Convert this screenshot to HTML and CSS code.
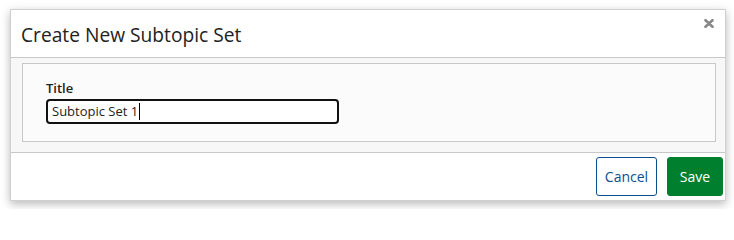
FILE: index.html
```html
<!DOCTYPE html>
<html>
<head>
<meta charset="utf-8">
<link rel="stylesheet" href="styles.css">
</head>
<body>
<div class="dialog">
  <div class="header">
    <h1 class="title">Create New Subtopic Set</h1>
    <svg class="close" width="10" height="9" viewBox="0 0 10 9" aria-label="Close">
      <path d="M1.5 1.2 L8.5 7.8 M8.5 1.2 L1.5 7.8" stroke="#888" stroke-width="2.6" stroke-linecap="round"/>
    </svg>
  </div>
  <div class="body">
    <div class="panel">
      <div class="label">Title</div>
      <div class="input">Subtopic Set 1<span class="caret"></span></div>
    </div>
  </div>
  <div class="footer">
    <button class="btn btn-cancel">Cancel</button>
    <button class="btn btn-save">Save</button>
  </div>
</div>
</body>
</html>
```
FILE: styles.css
```css
html, body {
  margin: 0;
  background: #fff;
}
body {
  padding: 9px 8px 8px 10px;
  font-family: "Open Sans", "Noto Sans", sans-serif;
}
.dialog {
  width: 716px;
  height: 192px;
  box-sizing: border-box;
  border: 1px solid #d0d0d0;
  background: #fff;
  box-shadow: 0 3px 9px rgba(0,0,0,0.28);
  display: flex;
  flex-direction: column;
}
.header {
  height: 47px;
  border-bottom: 1px solid #c8c8c8;
  display: flex;
  align-items: flex-start;
  justify-content: space-between;
  padding: 0 11px 0 10px;
}
.title {
  margin: 0;
  padding-top: 12px;
  font-size: 19.2px;
  font-weight: 400;
  color: #222;
  line-height: 26px;
}
.close {
  margin-top: 9px;
  display: block;
}
.body {
  background: #f7f7f7;
  padding: 5px 9px 10px 11px;
}
.panel {
  border: 1px solid #c8c8c8;
  background: #fbfbfb;
  height: 79px;
  box-sizing: border-box;
  padding: 14px 24px 0 23px;
}
.label {
  font-size: 13px;
  font-weight: 600;
  color: #222;
  line-height: 21px;
}
.input {
  width: 293px;
  height: 25px;
  box-sizing: border-box;
  border: 2px solid #111;
  border-radius: 4px;
  background: #fff;
  font-size: 13px;
  line-height: 21px;
  padding-left: 4px;
  color: #222;
  display: flex;
  align-items: center;
}
.caret {
  display: inline-block;
  width: 1px;
  height: 17px;
  background: #000;
  margin-left: 1px;
}
.footer {
  flex: 1;
  border-top: 1px solid #c8c8c8;
  display: flex;
  justify-content: flex-end;
  align-items: flex-start;
  gap: 10px;
  padding: 4px 2px 0 0;
}
.btn {
  font-family: "Open Sans", "Noto Sans", sans-serif;
  font-size: 14px;
  height: 39px;
  border-radius: 3px;
  padding: 0;
  cursor: pointer;
}
.btn-cancel {
  width: 61px;
  background: #fff;
  color: #0a4f8f;
  border: 1px solid #0a4f8f;
}
.btn-save {
  width: 56px;
  background: #00802e;
  color: #fff;
  border: 1px solid #00802e;
}
```
